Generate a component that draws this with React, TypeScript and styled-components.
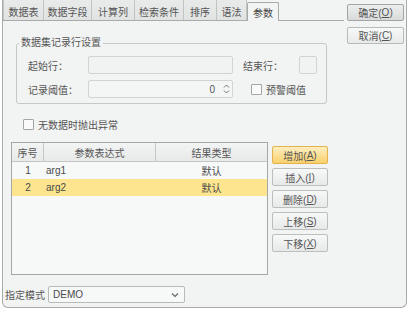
import styled, { createGlobalStyle } from 'styled-components'

const GlobalStyle = createGlobalStyle`
  html, body {
    margin: 0;
    padding: 0;
    background: #ffffff;
  }
  body {
    font-family: "Liberation Sans", "Noto Sans CJK SC", sans-serif;
    font-size: 10px;
    color: #4a4a4a;
  }
`

const tabs = ['数据表', '数据字段', '计算列', '检索条件', '排序', '语法']
const tabWidths = [41, 48, 43, 49, 33, 30]

const rows = [
    { no: 1, expr: 'arg1', type: '默认' },
    { no: 2, expr: 'arg2', type: '默认' },
]

const sideButtons = [
    { label: '增加', key: 'A', active: true },
    { label: '插入', key: 'I' },
    { label: '删除', key: 'D' },
    { label: '上移', key: 'S' },
    { label: '下移', key: 'X' },
]

const App = () => {
    return (
        <>
            <GlobalStyle />
            <Window>
                <Main>
                    <TabRow>
                        {tabs.map((t, idx) => (
                            <Tab key={t} $w={tabWidths[idx]} $first={idx === 0}>
                                {t}
                            </Tab>
                        ))}
                        <ActiveTab>参数</ActiveTab>
                    </TabRow>
                    <Panel>
                        <GroupBox>
                            <Legend>数据集记录行设置</Legend>
                            <FieldRow>
                                <FieldLabel>起始行：</FieldLabel>
                                <TextBox />
                                <EndLabel>结束行：</EndLabel>
                                <SmallBox />
                            </FieldRow>
                            <FieldRow>
                                <FieldLabel>记录阈值：</FieldLabel>
                                <SpinBox>
                                    <SpinValue>0</SpinValue>
                                    <Spinner>
                                        <svg width="7" height="12" viewBox="0 0 7 12">
                                            <path d="M1 4.5 L3.5 2 L6 4.5" fill="none" stroke="#777" strokeWidth="1" />
                                            <path d="M1 7.5 L3.5 10 L6 7.5" fill="none" stroke="#777" strokeWidth="1" />
                                        </svg>
                                    </Spinner>
                                </SpinBox>
                                <CheckWrap $ml={18}>
                                    <CheckBox />
                                    预警阈值
                                </CheckWrap>
                            </FieldRow>
                        </GroupBox>

                        <ExceptionRow>
                            <CheckBox />
                            无数据时抛出异常
                        </ExceptionRow>

                        <TableArea>
                            <Table>
                                <HeadRow>
                                    <HeadCell>序号</HeadCell>
                                    <HeadCell>参数表达式</HeadCell>
                                    <HeadCell>结果类型</HeadCell>
                                </HeadRow>
                                {rows.map((r) => (
                                    <BodyRow key={r.no} $selected={r.no === 2}>
                                        <Cell $align="center">{r.no}</Cell>
                                        <Cell $align="left">{r.expr}</Cell>
                                        <Cell $align="center">{r.type}</Cell>
                                    </BodyRow>
                                ))}
                            </Table>
                            <SideButtons>
                                {sideButtons.map((b) => (
                                    <Button key={b.key} $active={b.active}>
                                        {b.label}(<u>{b.key}</u>)
                                    </Button>
                                ))}
                            </SideButtons>
                        </TableArea>

                        <ModeRow>
                            <ModeLabel>指定模式</ModeLabel>
                            <Select>
                                <span>DEMO</span>
                                <svg width="8" height="6" viewBox="0 0 8 6">
                                    <path d="M1 1.5 L4 4.5 L7 1.5" fill="none" stroke="#666" strokeWidth="1.2" />
                                </svg>
                            </Select>
                        </ModeRow>
                    </Panel>
                </Main>
                <Side>
                    <DialogButton $default>
                        确定(<u>O</u>)
                    </DialogButton>
                    <DialogButton>
                        取消(<u>C</u>)
                    </DialogButton>
                </Side>
            </Window>
        </>
    )
}

export default App

const Window = styled.div`
    box-sizing: border-box;
    width: 405px;
    height: 308px;
    margin-left: 2px;
    display: flex;
    border: 1px solid #a9abab;
    border-top: none;
    border-radius: 0 0 6px 6px;
    background: #f2f3f3;
`

const Main = styled.div`
    width: 341px;
    display: flex;
    flex-direction: column;
`

const TabRow = styled.div`
    box-sizing: border-box;
    height: 21px;
    display: flex;
    align-items: flex-end;
    border-bottom: 1px solid #a9abab;
`

const Tab = styled.div<{ $w: number; $first?: boolean }>`
    box-sizing: border-box;
    width: ${(p) => p.$w}px;
    height: 20px;
    padding-top: 2px;
    display: flex;
    align-items: center;
    justify-content: center;
    background: linear-gradient(#e9eaea, #e1e3e3);
    border-right: 1px solid #c2c4c4;
    border-left: ${(p) => (p.$first ? '1px solid #c2c4c4' : 'none')};
    color: #555;
`

const ActiveTab = styled.div`
    box-sizing: border-box;
    width: 32px;
    height: 19px;
    margin-bottom: -1px;
    padding-top: 1px;
    display: flex;
    align-items: center;
    justify-content: center;
    background: #f2f3f3;
    border: 1px solid #a9abab;
    border-bottom: none;
    border-radius: 2px 2px 0 0;
    color: #444;
`

const Panel = styled.div`
    display: flex;
    flex-direction: column;
    align-items: flex-start;
`

const GroupBox = styled.fieldset`
    box-sizing: border-box;
    width: 311px;
    min-width: 0;
    margin: 16px 0 0 13px;
    padding: 7px 0 5px 0;
    display: flex;
    flex-direction: column;
    gap: 6px;
    border: 1px solid #c6c8c8;
    border-radius: 3px;
`

const Legend = styled.legend`
    margin-left: 2px;
    padding: 0 2px;
    line-height: 12px;
    color: #555;
`

const FieldRow = styled.div`
    height: 18px;
    padding-left: 11px;
    display: flex;
    align-items: center;
`

const FieldLabel = styled.span`
    width: 60px;
    color: #555;
`

const TextBox = styled.div`
    box-sizing: border-box;
    width: 145px;
    height: 18px;
    border: 1px solid #d2d4d4;
    border-radius: 2px;
    background: #f1f2f2;
`

const EndLabel = styled.span`
    width: 56px;
    margin-left: 10px;
    color: #555;
`

const SmallBox = styled(TextBox)`
    width: 18px;
`

const SpinBox = styled(TextBox)`
    display: flex;
    align-items: center;
    justify-content: flex-end;
    background: #f4f5f5;
`

const SpinValue = styled.span`
    margin-right: 6px;
    color: #555;
`

const Spinner = styled.div`
    width: 10px;
    height: 16px;
    display: flex;
    align-items: center;
    justify-content: center;
    margin-right: 1px;
`

const CheckBox = styled.span`
    box-sizing: border-box;
    width: 11px;
    height: 11px;
    margin-right: 4px;
    border: 1px solid #a4a6a6;
    border-radius: 1px;
    background: #fafafa;
`

const CheckWrap = styled.div<{ $ml: number }>`
    margin-left: ${(p) => p.$ml}px;
    display: flex;
    align-items: center;
    color: #555;
`

const ExceptionRow = styled.div`
    height: 11px;
    margin: 15px 0 0 20px;
    display: flex;
    align-items: center;
    color: #555;
`

const TableArea = styled.div`
    margin: 12px 0 0 8px;
    display: flex;
    align-items: flex-start;
`

const Table = styled.div`
    box-sizing: border-box;
    width: 257px;
    height: 133px;
    border: 1px solid #a5a7a7;
    background: #f7f8f8;
`

const HeadRow = styled.div`
    display: grid;
    grid-template-columns: 32px 112px 1fr;
    height: 18px;
    background: linear-gradient(#f3f4f4, #e8eaea);
    border-bottom: 1px solid #c4c6c6;
`

const HeadCell = styled.div`
    display: flex;
    align-items: center;
    justify-content: center;
    border-right: 1px solid #c4c6c6;
    color: #555;

    &:last-child {
        border-right: none;
    }
`

const BodyRow = styled.div<{ $selected?: boolean }>`
    display: grid;
    grid-template-columns: 32px 112px 1fr;
    height: 17px;
    background: ${(p) => (p.$selected ? '#fce58e' : 'transparent')};
`

const Cell = styled.div<{ $align: 'left' | 'center' }>`
    display: flex;
    align-items: center;
    justify-content: ${(p) => (p.$align === 'center' ? 'center' : 'flex-start')};
    padding-left: ${(p) => (p.$align === 'left' ? '2px' : '0')};
    color: #4a4a4a;
`

const SideButtons = styled.div`
    margin: 4px 0 0 4px;
    display: flex;
    flex-direction: column;
    gap: 4px;
`

const Button = styled.div<{ $active?: boolean }>`
    box-sizing: border-box;
    width: 56px;
    height: 18px;
    display: flex;
    align-items: center;
    justify-content: center;
    border: 1px solid ${(p) => (p.$active ? '#e2b24e' : '#bcbebe')};
    border-radius: 2px;
    background: ${(p) =>
        p.$active
            ? 'linear-gradient(#fdeec0, #f9d16c)'
            : 'linear-gradient(#f7f8f8, #e7e9e9)'};
    color: #555;

    u {
        text-decoration-thickness: 1px;
    }
`

const ModeRow = styled.div`
    margin: 11px 0 0 2px;
    display: flex;
    align-items: center;
`

const ModeLabel = styled.span`
    width: 43px;
    color: #555;
`

const Select = styled.div`
    box-sizing: border-box;
    width: 137px;
    height: 17px;
    padding: 0 5px 0 4px;
    display: flex;
    align-items: center;
    justify-content: space-between;
    border: 1px solid #b8baba;
    border-radius: 2px;
    background: #f7f8f8;
    color: #4a4a4a;
`

const Side = styled.div`
    padding: 4px 0 0 3px;
    display: flex;
    flex-direction: column;
    gap: 6px;
`

const DialogButton = styled.div<{ $default?: boolean }>`
    box-sizing: border-box;
    width: 57px;
    height: 17px;
    display: flex;
    align-items: center;
    justify-content: center;
    border: 1px solid ${(p) => (p.$default ? '#a3a5a5' : '#b8baba')};
    border-radius: 2px;
    background: ${(p) =>
        p.$default
            ? 'linear-gradient(#eceeee, #d9dbdb)'
            : 'linear-gradient(#f7f8f8, #e8eaea)'};
    color: #555;
`
